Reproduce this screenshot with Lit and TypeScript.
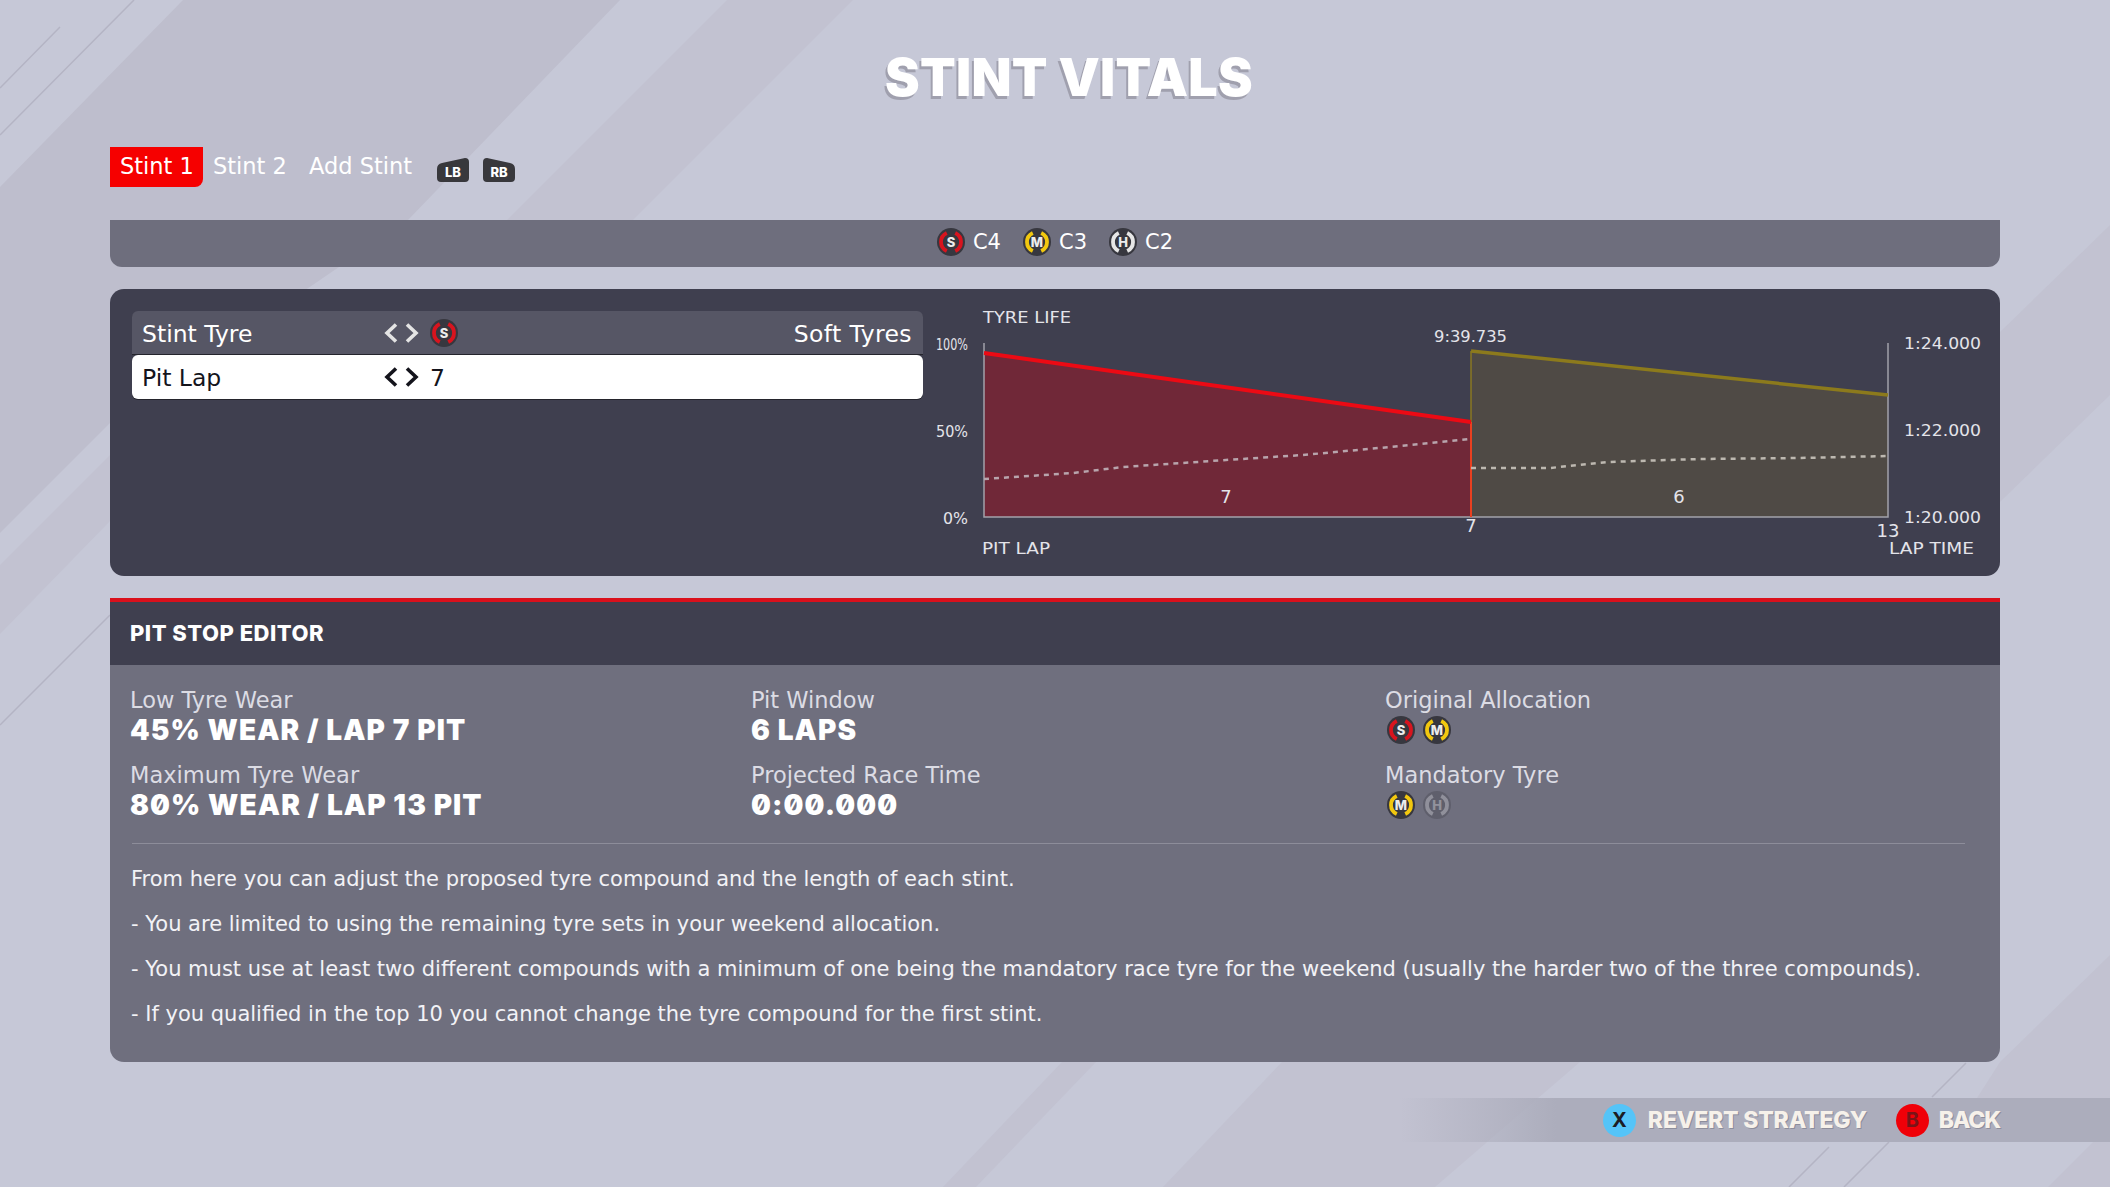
import { LitElement, css, html, svg } from "lit";
import { customElement, property } from "lit/decorators.js";

const COMPOUNDS: Record<string, string> = { S: "#d8141e", M: "#f2c80f", H: "#e6e6e6" };

@customElement("tyre-icon")
export class TyreIcon extends LitElement {
    @property() kind = "S";
    @property({ type: Boolean }) dim = false;

    static styles = css`
        :host { display: inline-flex; flex: none; width: 28px; height: 28px; }
        svg { width: 28px; height: 28px; display: block; }
        .dim { opacity: 0.28; }
        text { font: 800 13px "Inter", "Liberation Sans", sans-serif; fill: #ececec; text-anchor: middle; }
    `;

    render() {
        const c = COMPOUNDS[this.kind];
        return html`
            <svg viewBox="0 0 28 28" class=${this.dim ? "dim" : ""}>
                <circle cx="14" cy="14" r="14" fill="#37373f"></circle>
                <path d="M18.23 4.94A10 10 0 0 1 18.23 23.06M9.77 4.94A10 10 0 0 0 9.77 23.06"
                    fill="none" stroke=${c} stroke-width="3.8"></path>
                <text x="14" y="18.7">${this.kind}</text>
            </svg>
        `;
    }
}

@customElement("app-root")
export class AppRoot extends LitElement {
    static styles = css`
        :host {
            display: block;
            position: relative;
            width: 2110px;
            height: 1187px;
            overflow: hidden;
            background: #c6c8d7;
            font-family: "DejaVu Sans", "Liberation Sans", sans-serif;
            color: #fff;
        }
        .backdrop { position: absolute; left: 0; top: 0; width: 2110px; height: 1187px; }
        .page { position: relative; display: flex; flex-direction: column; padding: 0 110px; height: 1187px; box-sizing: border-box; }

        .title {
            height: 147px;
            box-sizing: border-box;
            padding: 50px 0 0 28px;
            text-align: center;
            font-family: "Inter", "Liberation Sans", sans-serif;
            font-size: 52px;
            line-height: 56px;
            font-weight: 900;
            letter-spacing: 0.3px;
            text-shadow: -2px 3px 0 #a0a0ae;
        }

        .tabs { display: flex; align-items: center; height: 40px; margin-bottom: 33px; font-size: 22.5px; }
        .tab { height: 40px; line-height: 38px; white-space: nowrap; }
        .tab.active { width: 93px; box-sizing: border-box; padding-left: 10px; background: #f60000; border-radius: 0 0 8px 0; }
        .tab.second { width: 72px; margin-left: 10px; }
        .tab.add { width: 103px; margin-left: 24px; }
        .bumpers { display: flex; gap: 14px; margin-left: 25px; margin-top: 6px; }
        .bumpers svg { display: block; width: 32px; height: 24px; }
        .bumpers text { font: 800 13px "Inter", "Liberation Sans", sans-serif; fill: #fff; text-anchor: middle; }

        .compounds {
            display: flex;
            align-items: center;
            justify-content: center;
            gap: 22px;
            height: 47px;
            box-sizing: border-box;
            padding-bottom: 3px;
            margin-bottom: 22px;
            background: #6e6e7d;
            border-radius: 0 0 12px 12px;
            font-size: 21px;
        }
        .compound { display: flex; align-items: center; gap: 8px; }

        .strategy {
            display: flex;
            height: 287px;
            margin-bottom: 22px;
            background: #3f3f4f;
            border-radius: 14px;
            padding-left: 22px;
            overflow: hidden;
        }
        .rows { flex: none; width: 791px; padding-top: 22px; display: flex; flex-direction: column; gap: 1px; }
        .row {
            display: flex;
            align-items: center;
            height: 43px;
            box-sizing: border-box;
            padding: 0 11px 0 10px;
            font-size: 23.5px;
            border-radius: 6px 6px 0 0;
            background: #565665;
            box-shadow: 0 1px 0 #24242c;
        }
        .row.selected { height: 44px; background: #fff; color: #14141c; border-radius: 6px; }
        .row .name { width: 242px; flex: none; padding-top: 2px; }
        .row .chev { width: 35px; height: 20px; flex: none; margin-right: 11px; color: #e4e4e4; }
        .row.selected .chev { color: #14141c; }
        .row .val { margin-left: auto; padding-top: 2px; letter-spacing: 0.4px; }
        .row .lap { padding-top: 2px; }
        .chart { flex: none; width: 1077px; height: 287px; display: block; }
        .chart text { font-size: 16px; fill: #e4e4ea; }
        .chart .mid { text-anchor: middle; font-size: 18px; }

        .editor { height: 464px; border-top: 4px solid #d9101c; background: #6f6f7e; border-radius: 0 0 14px 14px; box-sizing: border-box; }
        .editor-head {
            height: 63px;
            box-sizing: border-box;
            padding: 0 0 2px 20px;
            display: flex;
            align-items: center;
            background: #3f3f4f;
            font-family: "Inter", "Liberation Sans", sans-serif;
            font-size: 22px;
            font-weight: 800;
            letter-spacing: 0.5px;
        }
        .stats { display: grid; grid-template-columns: 621px 634px 1fr; padding: 21px 0 0 20px; }
        .stat { height: 75px; }
        .stat .label { font-size: 22.5px; line-height: 28px; color: #dcdce4; }
        .stat .value {
            font-family: "Inter", "Liberation Sans", sans-serif;
            font-size: 28px;
            line-height: 32px;
            font-weight: 900;
            letter-spacing: 1.1px;
            font-feature-settings: "zero";
        }
        .stat .icons { display: flex; gap: 8px; height: 32px; align-items: center; margin-left: 2px; }
        .divider { height: 1px; margin: 7px 35px 21px 22px; background: #8d8d9a; }
        .notes { padding-left: 21px; font-size: 21px; line-height: 28px; color: #f2f2f6; }
        .notes p { margin: 0 0 17px; white-space: nowrap; }

        .footer {
            align-self: flex-end;
            display: flex;
            align-items: center;
            justify-content: flex-end;
            width: 710px;
            height: 44px;
            margin: 36px -110px 0 0;
            padding-right: 110px;
            box-sizing: border-box;
            background: linear-gradient(90deg, rgba(168, 169, 184, 0) 0%, #acadbc 22%, #acadbc 100%);
            font-family: "Inter", "Liberation Sans", sans-serif;
            font-size: 23px;
            font-weight: 800;
            color: #f6f1ea;
            letter-spacing: -0.2px;
            text-shadow: 1px 1px 0 #8e8e9c;
        }
        .footer .back { letter-spacing: -1.2px; }
        .btn {
            width: 33px;
            height: 33px;
            border-radius: 50%;
            display: flex;
            align-items: center;
            justify-content: center;
            margin-right: 10px;
            font-size: 20px;
            font-weight: 700;
            text-shadow: none;
        }
        .btn.x { background: #55c4f8; color: #1c1c24; margin-right: 12px; }
        .btn.b { background: #f00008; color: #7a1418; margin-left: 29px; }
    `;

    private _backdrop() {
        const dark = "#bebecd";
        const soft = "#c2c2d1";
        return html`
            <svg class="backdrop" viewBox="0 0 2110 1187">
                <polygon fill=${dark} points="183,0 620,0 408,220 110,423 0,533 0,187"></polygon>
                <polygon fill=${soft} points="0,565 110,455 110,521 0,634"></polygon>
                <polygon fill=${soft} points="727,0 853,0 633,220 507,220"></polygon>
                <polygon fill=${soft} points="1062,1062 1096,1062 976,1187 943,1187"></polygon>
                <polygon fill=${soft} points="1282,1062 1580,1062 1435,1187 1163,1187"></polygon>
                <polygon fill=${soft} points="2000,332 2110,225 2110,395 2000,502"></polygon>
                <polygon fill=${soft} points="2000,1062 2110,955 2110,1098 1977,1098"></polygon>
                <polygon fill=${soft} points="2093,1142 2110,1142 2110,1187 2048,1187"></polygon>
                <g stroke="#b4b4c4" stroke-width="1.5" fill="none">
                    <path d="M134 0L0 135M60 27L0 88M110 615L0 725"></path>
                    <path d="M1966 1063L1932 1097M1829 1147L1789 1187M1889 1142L1844 1187"></path>
                </g>
            </svg>
        `;
    }

    private _chevrons() {
        return html`
            <svg class="chev" viewBox="0 0 35 20">
                <path d="M12 1.5L3 10L12 18.5M23 1.5L32 10L23 18.5" fill="none" stroke="currentColor" stroke-width="3.6"></path>
            </svg>
        `;
    }

    private _bumper(label: string, flip: boolean) {
        const shape = flip
            ? "M4 0L27 5Q32 6 32 11V20Q32 24 28 24H4Q0 24 0 20V4Q0 0 4 0Z"
            : "M28 0L5 5Q0 6 0 11V20Q0 24 4 24H28Q32 24 32 20V4Q32 0 28 0Z";
        return html`
            <svg viewBox="0 0 32 24">
                <path d=${shape} fill="#38383c"></path>
                <text x="16" y="19">${label}</text>
            </svg>
        `;
    }

    private _chart() {
        // drawn in page coordinates, the viewBox starts where the row list ends
        const wear1 = "M984 479L1073 473L1123 467L1226 460L1303 455L1379 448L1471 439";
        const wear2 = "M1471 468L1550 468L1607 462L1700 459L1800 458L1888 456";
        return svg`
            <polygon fill="#702838" points="984,353 1471,422 1471,517 984,517"></polygon>
            <polygon fill="#4f4a45" points="1471,351 1888,395 1888,517 1471,517"></polygon>
            <path d="M984 343V517H1888V343" fill="none" stroke="#a2a2aa" stroke-width="1.5"></path>
            <path d="M1471 351V517" stroke="#8a7820" stroke-width="1.5"></path>
            <path d="M1471 422V517" stroke="#ea4020" stroke-width="2"></path>
            <path d="M984 353L1471 422" stroke="#ec0a14" stroke-width="4"></path>
            <path d="M1471 351L1888 395" stroke="#8c7a1c" stroke-width="3.5"></path>
            <path d=${wear1} fill="none" stroke="#b8a4ac" stroke-width="2.5" stroke-dasharray="5 5"></path>
            <path d=${wear2} fill="none" stroke="#bdb8b0" stroke-width="2.5" stroke-dasharray="5 5"></path>

            <text x="983" y="323" textLength="88" lengthAdjust="spacingAndGlyphs">TYRE LIFE</text>
            <text x="982" y="554" textLength="68" lengthAdjust="spacingAndGlyphs">PIT LAP</text>
            <text x="1889" y="554" textLength="85" lengthAdjust="spacingAndGlyphs">LAP TIME</text>
            <text x="936" y="350" textLength="32" lengthAdjust="spacingAndGlyphs" style="font-size:15px">100%</text>
            <text x="936" y="437" textLength="32" lengthAdjust="spacingAndGlyphs" style="font-size:15px">50%</text>
            <text x="943" y="524" textLength="25" lengthAdjust="spacingAndGlyphs" style="font-size:15px">0%</text>
            <text x="1434" y="342" textLength="73" lengthAdjust="spacingAndGlyphs">9:39.735</text>
            <text x="1226" y="503" class="mid">7</text>
            <text x="1679" y="503" class="mid">6</text>
            <text x="1471" y="532" class="mid">7</text>
            <text x="1888" y="537" class="mid">13</text>
            <text x="1904" y="349" textLength="77" lengthAdjust="spacingAndGlyphs">1:24.000</text>
            <text x="1904" y="436" textLength="77" lengthAdjust="spacingAndGlyphs">1:22.000</text>
            <text x="1904" y="523" textLength="77" lengthAdjust="spacingAndGlyphs">1:20.000</text>
        `;
    }

    render() {
        return html`
            ${this._backdrop()}
            <div class="page">
                <div class="title">STINT VITALS</div>

                <div class="tabs">
                    <div class="tab active">Stint 1</div>
                    <div class="tab second">Stint 2</div>
                    <div class="tab add">Add Stint</div>
                    <div class="bumpers">
                        ${this._bumper("LB", false)}
                        ${this._bumper("RB", true)}
                    </div>
                </div>

                <div class="compounds">
                    <div class="compound"><tyre-icon kind="S"></tyre-icon>C4</div>
                    <div class="compound"><tyre-icon kind="M"></tyre-icon>C3</div>
                    <div class="compound"><tyre-icon kind="H"></tyre-icon>C2</div>
                </div>

                <div class="strategy">
                    <div class="rows">
                        <div class="row">
                            <span class="name">Stint Tyre</span>
                            ${this._chevrons()}
                            <tyre-icon kind="S"></tyre-icon>
                            <span class="val">Soft Tyres</span>
                        </div>
                        <div class="row selected">
                            <span class="name">Pit Lap</span>
                            ${this._chevrons()}
                            <span class="lap">7</span>
                        </div>
                    </div>
                    <svg class="chart" viewBox="923 289 1077 287">${this._chart()}</svg>
                </div>

                <div class="editor">
                    <div class="editor-head">PIT STOP EDITOR</div>
                    <div class="stats">
                        <div class="stat"><div class="label">Low Tyre Wear</div><div class="value">45% WEAR / LAP 7 PIT</div></div>
                        <div class="stat"><div class="label">Pit Window</div><div class="value">6 LAPS</div></div>
                        <div class="stat">
                            <div class="label">Original Allocation</div>
                            <div class="icons"><tyre-icon kind="S"></tyre-icon><tyre-icon kind="M"></tyre-icon></div>
                        </div>
                        <div class="stat"><div class="label">Maximum Tyre Wear</div><div class="value">80% WEAR / LAP 13 PIT</div></div>
                        <div class="stat"><div class="label">Projected Race Time</div><div class="value">0:00.000</div></div>
                        <div class="stat">
                            <div class="label">Mandatory Tyre</div>
                            <div class="icons"><tyre-icon kind="M"></tyre-icon><tyre-icon kind="H" dim></tyre-icon></div>
                        </div>
                    </div>
                    <div class="divider"></div>
                    <div class="notes">
                        <p>From here you can adjust the proposed tyre compound and the length of each stint.</p>
                        <p>- You are limited to using the remaining tyre sets in your weekend allocation.</p>
                        <p>- You must use at least two different compounds with a minimum of one being the mandatory race tyre for the weekend (usually the harder two of the three compounds).</p>
                        <p>- If you qualified in the top 10 you cannot change the tyre compound for the first stint.</p>
                    </div>
                </div>

                <div class="footer">
                    <span class="btn x">X</span>REVERT STRATEGY
                    <span class="btn b">B</span><span class="back">BACK</span>
                </div>
            </div>
        `;
    }
}
